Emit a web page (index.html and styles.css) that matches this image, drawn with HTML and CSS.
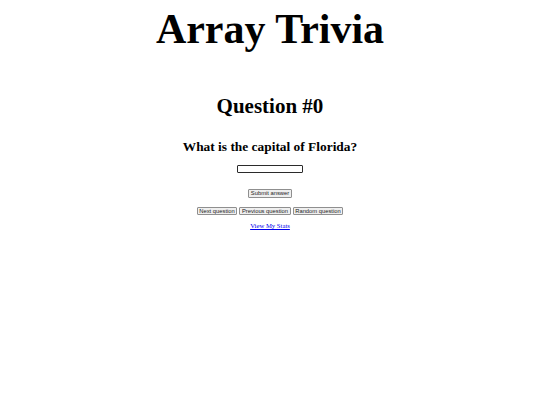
FILE: index.html
```html
<!DOCTYPE html>
<html>
<head>
<meta charset="utf-8">
<title>Array Trivia</title>
<link rel="stylesheet" href="styles.css">
</head>
<body>
<main class="page">
  <h1 class="title">Array Trivia</h1>
  <h2 class="qnum">Question #0</h2>
  <h3 class="qtext">What is the capital of Florida?</h3>
  <div class="answer-row"><input class="answer" type="text"></div>
  <div class="submit-row"><button class="btn">Submit answer</button></div>
  <div class="nav-row">
    <button class="btn">Next question</button>
    <button class="btn">Previous question</button>
    <button class="btn">Random question</button>
  </div>
  <div class="stats-row"><a class="stats" href="#">View My Stats</a></div>
</main>
</body>
</html>
```

FILE: styles.css
```css
html, body {
  margin: 0;
  padding: 0;
  background: #ffffff;
}
.page {
  display: flex;
  flex-direction: column;
  align-items: center;
  padding-top: 5px;
  font-family: "Liberation Serif", "Times New Roman", serif;
  color: #000;
}
.title {
  margin: 0;
  font-size: 42px;
  line-height: 48px;
  font-weight: bold;
}
.qnum {
  margin: 41px 0 0;
  font-size: 21px;
  line-height: 24px;
  font-weight: bold;
}
.qtext {
  margin: 21px 0 0;
  font-size: 13.4px;
  line-height: 16px;
  font-weight: bold;
}
.answer-row {
  margin-top: 10px;
  display: flex;
}
.answer {
  box-sizing: border-box;
  width: 66px;
  height: 8px;
  margin: 0;
  padding: 0;
  border: 1px solid #2b2b2b;
  border-radius: 1px;
  background: #fff;
}
.submit-row {
  margin-top: 16px;
  display: flex;
}
.nav-row {
  margin-top: 9px;
  display: flex;
  gap: 2px;
}
.btn {
  box-sizing: border-box;
  height: 8.5px;
  margin: 0;
  padding: 0 1.6px;
  font-family: "Liberation Sans", Arial, sans-serif;
  font-size: 5.8px;
  line-height: 6px;
  color: #222;
  background: #efefef;
  border: 0.6px solid #8f8f8f;
  border-radius: 1px;
}
.stats-row {
  margin-top: 7px;
  display: flex;
}
.stats {
  font-size: 6.7px;
  line-height: 8px;
  color: #0000ee;
  text-decoration: underline;
}
```
